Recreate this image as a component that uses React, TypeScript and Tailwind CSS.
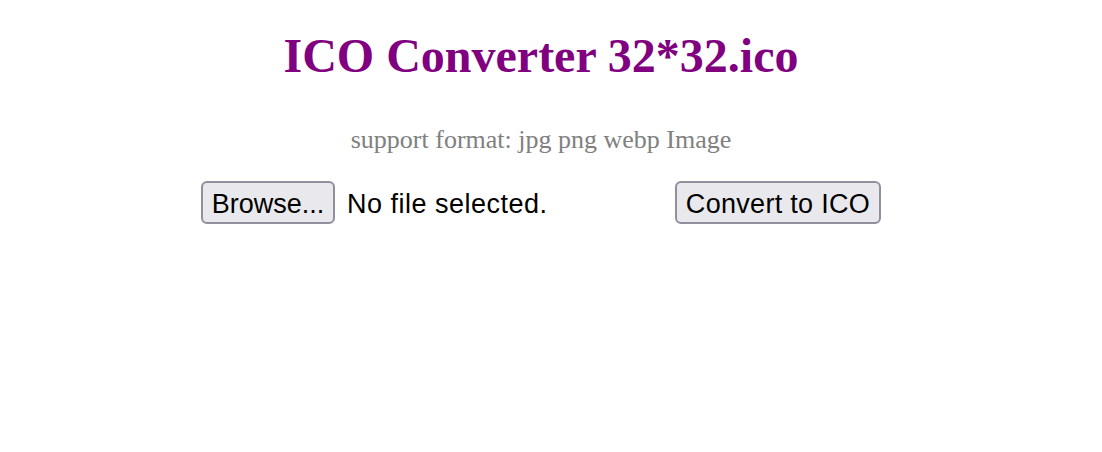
export default function App() {
  return (
    <div className="w-[1102px] h-[452px] bg-white pr-[20px]">
      <div className="flex flex-col items-center">
        <h1 className="mt-[28px] text-[48px] leading-[56px] font-bold text-[#800080] [font-family:'Liberation_Serif',serif]">
          ICO Converter 32*32.ico
        </h1>
        <p className="mt-[41px] text-[26px] leading-[30px] text-[#808080] [font-family:'Liberation_Serif',serif]">
          support format: jpg png webp Image
        </p>
        <div className="mt-[26px] flex items-center [font-family:'Liberation_Sans',sans-serif] text-[27px] text-black">
          <div className="w-[474px] flex items-center">
            <span className="w-[134px] h-[43px] pt-[3px] flex items-center justify-center bg-[#e9e9ed] border-2 border-[#8f8f9d] rounded-[6px]">
              Browse...
            </span>
            <span className="ml-[12px] pt-[3px] tracking-[0.5px]">No file selected.</span>
          </div>
          <span className="w-[206px] h-[43px] pt-[3px] flex items-center justify-center bg-[#e9e9ed] border-2 border-[#8f8f9d] rounded-[6px] tracking-[0.3px]">
            Convert to ICO
          </span>
        </div>
      </div>
    </div>
  );
}
